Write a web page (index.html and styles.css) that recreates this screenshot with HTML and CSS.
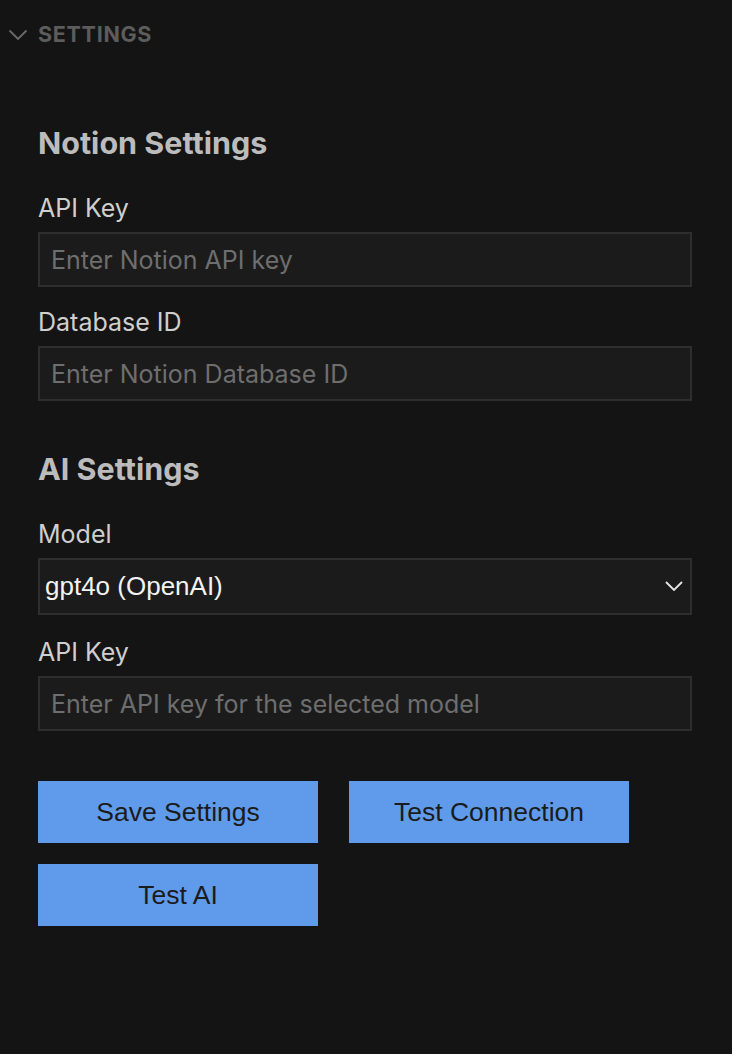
FILE: index.html
```html
<!DOCTYPE html>
<html>
<head>
<meta charset="utf-8">
<link rel="stylesheet" href="styles.css">
</head>
<body>
<div class="section-header">
  <svg class="chev" width="20" height="12" viewBox="0 0 20 12"><path d="M1.5 1.5 L10 10 L18.5 1.5" fill="none" stroke="#6a6a6a" stroke-width="1.8"/></svg>
  <span class="section-title">SETTINGS</span>
</div>
<main class="panel">
  <h3 class="heading first">Notion Settings</h3>
  <label class="label">API Key</label>
  <input class="field" type="text" placeholder="Enter Notion API key">
  <label class="label">Database ID</label>
  <input class="field" type="text" placeholder="Enter Notion Database ID">

  <h3 class="heading">AI Settings</h3>
  <label class="label">Model</label>
  <div class="select">
    <span class="select-value">gpt4o (OpenAI)</span>
    <svg class="select-chev" width="18" height="10" viewBox="0 0 18 10"><path d="M1 1 L9 9 L17 1" fill="none" stroke="#e6e6e6" stroke-width="1.8"/></svg>
  </div>
  <label class="label">API Key</label>
  <input class="field" type="text" placeholder="Enter API key for the selected model">

  <div class="buttons">
    <button class="btn">Save Settings</button>
    <button class="btn">Test Connection</button>
    <button class="btn">Test AI</button>
  </div>
</main>
</body>
</html>
```
FILE: styles.css
```css
html, body {
  margin: 0;
  padding: 0;
  background: #141414;
  height: 100%;
}
body {
  font-family: Inter, "Liberation Sans", sans-serif;
  color: #cccccc;
}
.section-header {
  display: flex;
  align-items: center;
  height: 44px;
  padding-top: 24px;
  padding-left: 8px;
  box-sizing: border-box;
  gap: 10px;
}
.chev { display: block; margin-top: 1px; }
.section-title {
  font-family: Inter, "Liberation Sans", sans-serif;
  font-weight: 700;
  font-size: 21.5px;
  letter-spacing: 0.7px;
  color: #5c5c5c;
}
.panel {
  padding: 0 40px 0 38px;
  display: flex;
  flex-direction: column;
}
.heading {
  margin: 50px 0 0 0;
  font-size: 30.5px;
  line-height: 36px;
  font-weight: 700;
  color: #bcbcbc;
}
.heading.first { margin-top: 81px; }
.label {
  display: block;
  margin-top: 30px;
  font-size: 25px;
  line-height: 30px;
  color: #cfcfcf;
}
.heading + .label { margin-top: 32px; }
.field + .label { margin-top: 20px; }
.select + .label { margin-top: 22px; }
.field {
  margin-top: 9px;
  height: 55px;
  box-sizing: border-box;
  border: 2px solid #2e2e2e;
  background: #1b1b1b;
  padding: 0 11px;
  font-family: Inter, "Liberation Sans", sans-serif;
  font-size: 25px;
  color: #cccccc;
  outline: none;
}
.field::placeholder { color: #6e6e6e; }
.select {
  margin-top: 9px;
  height: 57px;
  box-sizing: border-box;
  border: 2px solid #2e2e2e;
  background: #1b1b1b;
  display: flex;
  align-items: center;
  justify-content: space-between;
  padding: 0 7px 0 5px;
}
.select-value {
  font-family: "Liberation Sans", Arial, sans-serif;
  font-size: 26px;
  color: #f2f2f2;
}
.select-chev { display: block; margin-top: -2px; }
.buttons {
  margin-top: 50px;
  display: flex;
  flex-wrap: wrap;
  column-gap: 31px;
  row-gap: 21px;
}
.btn {
  width: 280px;
  height: 62px;
  border: none;
  background: #5f9bea;
  color: #1b1b1b;
  font-family: "Liberation Sans", Arial, sans-serif;
  font-size: 26.5px;
  padding: 0;
}
```
